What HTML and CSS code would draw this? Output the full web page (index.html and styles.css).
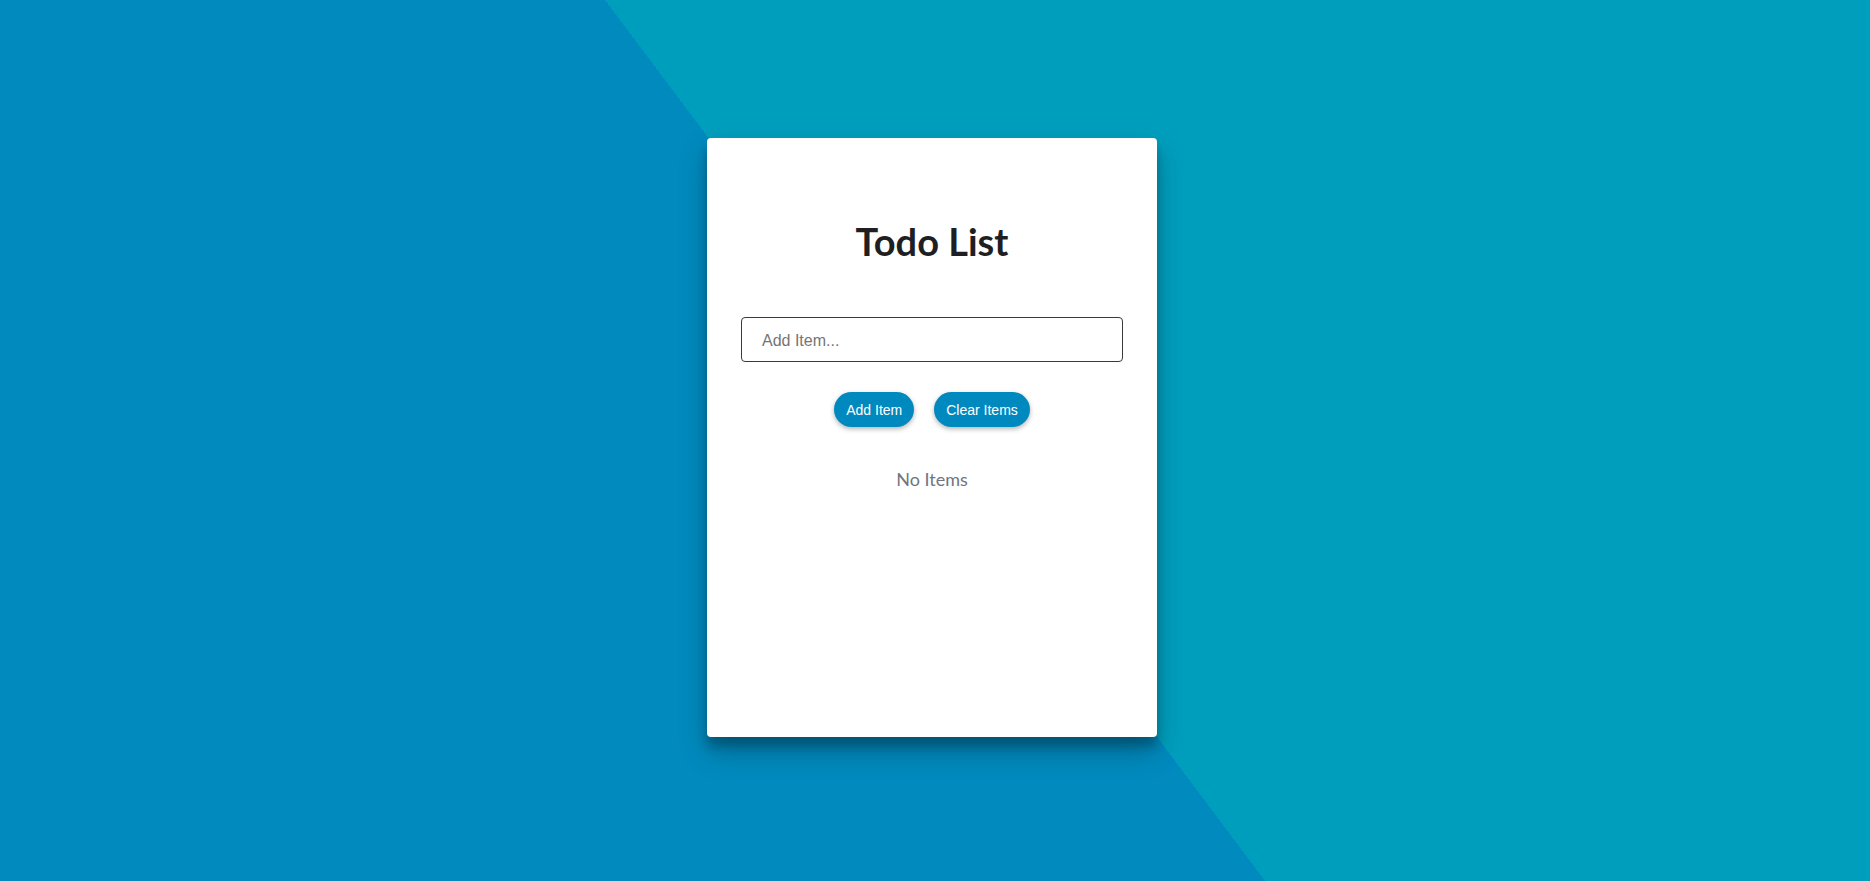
FILE: index.html
```html
<!DOCTYPE html>
<html lang="en">
<head>
<meta charset="utf-8">
<title>Todo List</title>
<link rel="stylesheet" href="styles.css">
</head>
<body>
<main class="page">
  <section class="card">
    <h1 class="title">Todo List</h1>
    <input class="item-input" type="text" placeholder="Add Item...">
    <div class="actions">
      <button class="btn" type="button">Add Item</button>
      <button class="btn" type="button">Clear Items</button>
    </div>
    <p class="empty">No Items</p>
  </section>
</main>
</body>
</html>
```

FILE: styles.css
```css
html, body {
  margin: 0;
  padding: 0;
  height: 100%;
}

body {
  background: linear-gradient(53.16deg, #008abe 50%, #009ebd 50%);
  font-family: "Lato", "Liberation Sans", sans-serif;
}

.page {
  box-sizing: border-box;
  height: 100vh;
  display: flex;
  align-items: center;
  justify-content: center;
  padding-right: 6px;
  padding-bottom: 6px;
}

.card {
  box-sizing: border-box;
  width: 450px;
  height: 599px;
  background: #ffffff;
  border-radius: 4px;
  padding: 81px 34px 0;
  display: flex;
  flex-direction: column;
  align-items: stretch;
  box-shadow: 0 14px 28px rgba(0, 0, 0, 0.25), 0 10px 10px rgba(0, 0, 0, 0.2);
}

.title {
  margin: 0;
  font-family: "Lato", sans-serif;
  font-weight: 700;
  font-size: 38px;
  line-height: 1.2;
  color: #1f1f23;
  text-align: center;
}

.item-input {
  box-sizing: border-box;
  margin: 52px 0 0;
  width: 100%;
  height: 45px;
  border: 1px solid #3a3a3a;
  border-radius: 4px;
  padding: 4px 20px 0;
  font-family: "Liberation Sans", Arial, sans-serif;
  font-size: 16px;
  color: #333;
  outline: none;
}

.item-input::placeholder {
  color: #757575;
}

.actions {
  margin-top: 30px;
  display: flex;
  justify-content: center;
  gap: 20px;
}

.btn {
  height: 35px;
  padding: 1px 12px 0;
  border: none;
  border-radius: 18px;
  background: #0089bf;
  color: #ffffff;
  font-family: "Liberation Sans", Arial, sans-serif;
  font-size: 14px;
  box-shadow: 0 2px 5px rgba(0, 0, 0, 0.3);
  cursor: pointer;
}

.empty {
  margin: 42px 0 0;
  font-family: "Lato", sans-serif;
  font-size: 18px;
  line-height: 1.2;
  color: #6f7580;
  text-align: center;
}
```
